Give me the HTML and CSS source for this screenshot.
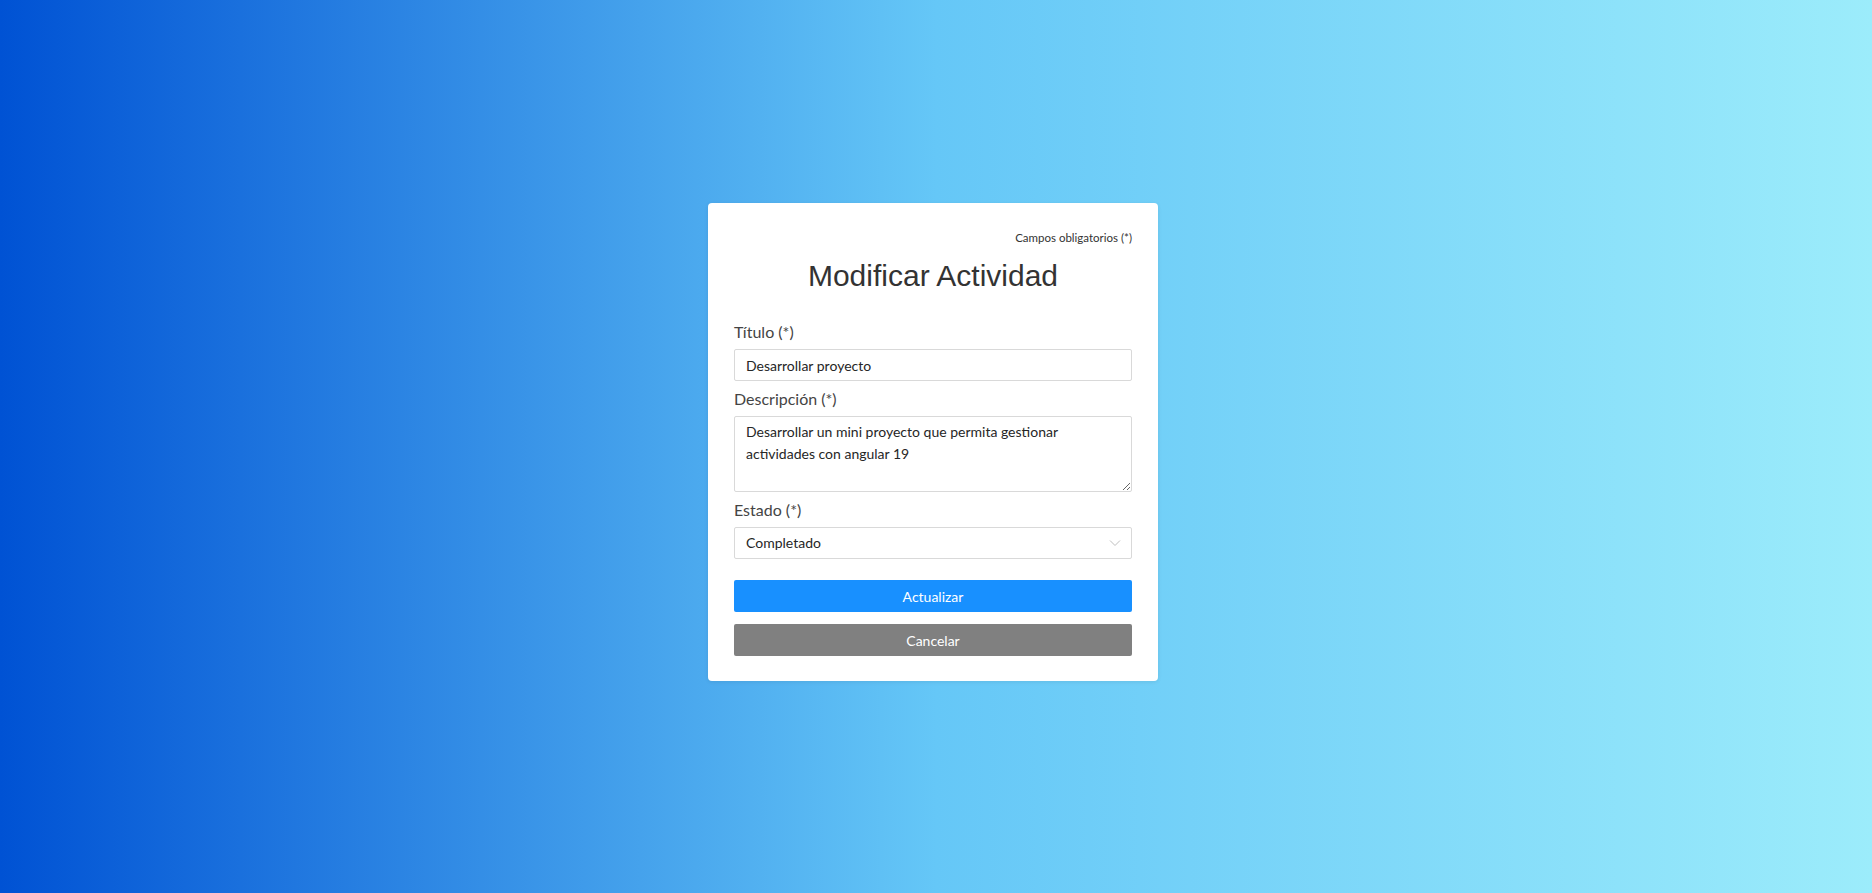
FILE: index.html
```html
<!DOCTYPE html>
<html lang="es">
<head>
<meta charset="utf-8">
<title>Modificar Actividad</title>
<link rel="stylesheet" href="styles.css">
</head>
<body>
<main class="page">
  <section class="card">
    <p class="required-note">Campos obligatorios (*)</p>
    <h1 class="title">Modificar Actividad</h1>
    <form class="form">
      <div class="group">
        <label class="label" for="titulo">Título (*)</label>
        <input class="control" id="titulo" type="text" value="Desarrollar proyecto">
      </div>
      <div class="group">
        <label class="label" for="descripcion">Descripción (*)</label>
        <textarea class="control area" id="descripcion" rows="3">Desarrollar un mini proyecto que permita gestionar actividades con angular 19</textarea>
      </div>
      <div class="group last">
        <label class="label">Estado (*)</label>
        <div class="control select">
          <span class="select-value">Completado</span>
          <svg class="arrow" width="12" height="12" viewBox="0 0 12 12" aria-hidden="true"><path d="M1 3.5 L6 8.5 L11 3.5" fill="none" stroke="#bfbfbf" stroke-width="1"/></svg>
        </div>
      </div>
      <button class="btn primary" type="button">Actualizar</button>
      <button class="btn secondary" type="button">Cancelar</button>
    </form>
  </section>
</main>
</body>
</html>
```
FILE: styles.css
```css
* { box-sizing: border-box; }
html, body { margin: 0; padding: 0; }
body {
  font-family: Lato, "Open Sans", "Liberation Sans", sans-serif;
  background: linear-gradient(to right, #0052d4, #65c7f7, #9cecfb);
  min-height: 100vh;
}
.page {
  min-height: 100vh;
  display: flex;
  align-items: center;
  justify-content: center;
  padding: 0 6px 9px 0;
}
.card {
  width: 450px;
  background: #fff;
  border-radius: 4px;
  padding: 26px 26px 25px;
  box-shadow: 0 1px 4px rgba(0, 0, 0, 0.08);
}
.required-note {
  margin: 0;
  text-align: right;
  font-size: 11.5px;
  line-height: 18px;
  color: #333;
}
.title {
  margin: 11px 0 26px;
  text-align: center;
  font-family: "Liberation Sans", Arial, sans-serif;
  font-weight: 400;
  font-size: 30px;
  line-height: 36px;
  color: #333;
}
.form { display: flex; flex-direction: column; }
.group { display: flex; flex-direction: column; margin-bottom: 6px; }
.group.last { margin-bottom: 21px; }
.label {
  font-size: 16px;
  line-height: 24px;
  color: #444;
  margin-bottom: 5px;
}
.control {
  width: 100%;
  height: 32px;
  border: 1px solid #d9d9d9;
  border-radius: 2px;
  padding: 4px 11px;
  font-family: inherit;
  font-size: 14px;
  line-height: 22px;
  color: #262626;
  background: #fff;
  outline: none;
  margin: 0;
}
.area { height: 76px; resize: vertical; display: block; }
.select {
  display: flex;
  align-items: center;
  justify-content: space-between;
}
.arrow { display: block; margin-right: -1px; }
.btn {
  height: 32px;
  width: 100%;
  border: none;
  border-radius: 2px;
  font-family: inherit;
  font-size: 14px;
  color: #fff;
  cursor: pointer;
  padding: 0;
}
.btn.primary { background: #1890ff; margin-bottom: 12px; }
.btn.secondary { background: #808080; }
```
